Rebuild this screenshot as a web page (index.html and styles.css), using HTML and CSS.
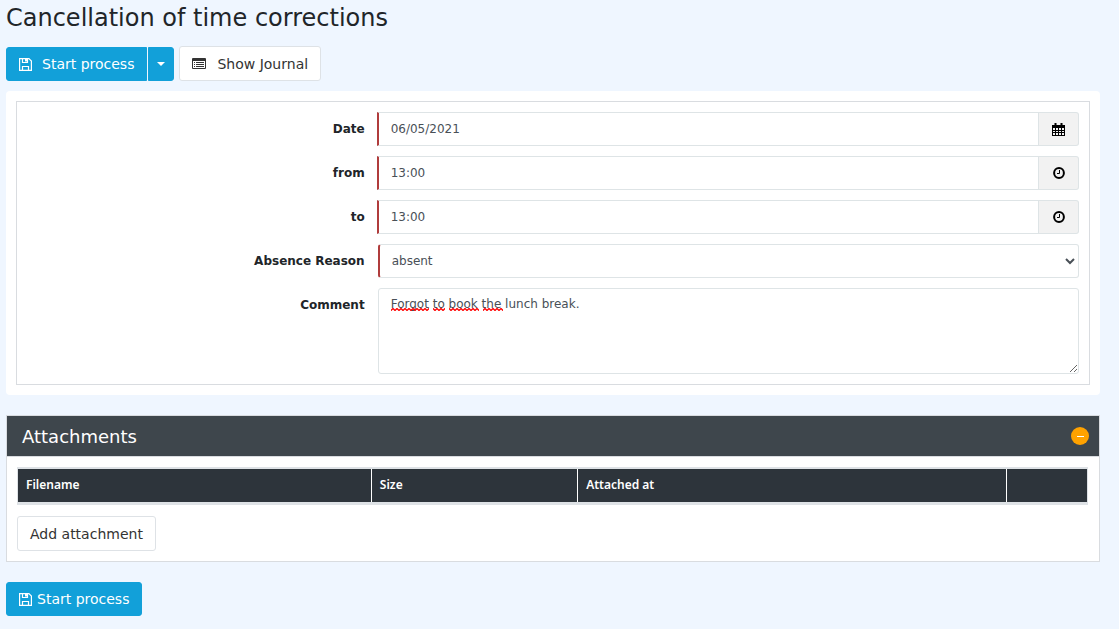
FILE: index.html
```html
<!doctype html>
<html lang="en">
  <head>
    <meta charset="UTF-8" />
    <meta name="viewport" content="width=device-width, initial-scale=1.0" />
    <title>Cancellation of time corrections</title>
    <link rel="stylesheet" href="styles.css">
  </head>
  <body>
    <svg class="sprite" aria-hidden="true">
      <symbol id="icon-save" viewBox="0 0 13 13">
        <path d="M.6.6h9.3l2.5 2.5v9.3H.6zM3.5.6v3.9h5V.6M3.5 12.4V8.5h6v3.9" fill="none" stroke="currentColor" stroke-width="1.2" />
        <path d="M6 1h2v2.5H6z" fill="currentColor" />
      </symbol>
      <symbol id="icon-clock" viewBox="0 0 12 12">
        <circle cx="6" cy="6" r="4.9" fill="none" stroke="currentColor" stroke-width="2" />
        <path d="M6.5 3v3.5H4" fill="none" stroke="currentColor" />
      </symbol>
    </svg>
    <main class="page">
      <h1>Cancellation of time corrections</h1>
      <div class="toolbar">
        <div class="btn-group">
          <button type="submit" form="correction" class="btn btn-primary">
            <svg class="icon-save icon-wide"><use href="#icon-save" /></svg>Start process
          </button>
          <button type="button" class="btn btn-primary btn-toggle" aria-label="More actions"><span class="caret"></span></button>
        </div>
        <button type="button" class="btn btn-default">
          <svg class="icon-list" viewBox="0 0 14 11">
            <path d="M1 0h12a1 1 0 0 1 1 1v9a1 1 0 0 1-1 1H1a1 1 0 0 1-1-1V1a1 1 0 0 1 1-1zM1 3v7h12V3z" fill="currentColor" fill-rule="evenodd" />
            <path d="M2 4.5h1M4 4.5h8M2 6.5h1M4 6.5h8M2 8.5h1M4 8.5h8" stroke="currentColor" />
          </svg>Show Journal
        </button>
      </div>

      <form class="panel" id="correction">
        <div class="fields">
          <div class="row">
            <label for="date">Date</label>
            <div class="input-group">
              <input type="text" id="date" class="control required" value="06/05/2021">
              <button type="button" class="addon" aria-label="Pick date">
                <svg class="icon-calendar" viewBox="0 0 13 13">
                  <path d="M0 2h13v11H0zM1 5v2h2V5zM4 5v2h2V5zM7 5v2h2V5zM10 5v2h2V5zM1 8v1h2V8zM4 8v1h2V8zM7 8v1h2V8zM10 8v1h2V8zM1 10v2h2v-2zM4 10v2h2v-2zM7 10v2h2v-2zM10 10v2h2v-2z" fill="currentColor" fill-rule="evenodd" />
                  <path d="M3.5 0v3M9.5 0v3" stroke="currentColor" stroke-width="2" />
                </svg>
              </button>
            </div>
          </div>
          <div class="row">
            <label for="from">from</label>
            <div class="input-group">
              <input type="text" id="from" class="control required" value="13:00">
              <button type="button" class="addon" aria-label="Pick start time"><svg class="icon-clock"><use href="#icon-clock" /></svg></button>
            </div>
          </div>
          <div class="row">
            <label for="to">to</label>
            <div class="input-group">
              <input type="text" id="to" class="control required" value="13:00">
              <button type="button" class="addon" aria-label="Pick end time"><svg class="icon-clock"><use href="#icon-clock" /></svg></button>
            </div>
          </div>
          <div class="row">
            <label for="reason">Absence Reason</label>
            <select id="reason" class="control required">
              <option>absent</option>
            </select>
          </div>
          <div class="row">
            <label for="comment">Comment</label>
            <div class="comment">
              <textarea id="comment" class="control" spellcheck="false">Forgot to book the lunch break.</textarea>
              <svg class="spelling" width="112" height="3" aria-hidden="true">
                <defs>
                  <pattern id="wave" width="4" height="3" patternUnits="userSpaceOnUse">
                    <path d="M-1 1.5l1 1 2-2 2 2 1-1" fill="none" stroke="#f00" stroke-width="1.3" />
                  </pattern>
                </defs>
                <path d="M0 0h38v3H0zM42 0h12v3H42zM58 0h30v3H58zM92 0h20v3H92z" fill="url(#wave)" />
              </svg>
            </div>
          </div>
        </div>
      </form>

      <section class="attachments">
        <header>
          <h2>Attachments</h2>
          <button type="button" class="collapse" aria-label="Collapse"></button>
        </header>
        <div class="attachments-body">
          <table>
            <thead>
              <tr>
                <th class="col-name">Filename</th>
                <th class="col-size">Size</th>
                <th class="col-date">Attached at</th>
                <th></th>
              </tr>
            </thead>
          </table>
          <button type="button" class="btn btn-default">Add attachment</button>
        </div>
      </section>

      <button type="submit" form="correction" class="btn btn-primary">
        <svg class="icon-save icon-tight"><use href="#icon-save" /></svg>Start process
      </button>
    </main>
  </body>
</html>
```

FILE: styles.css
```css
* {
  box-sizing: border-box;
}
body {
  margin: 0;
  background-color: #eff6ff;
  color: #212529;
  font-family: Verdana, "DejaVu Sans", sans-serif;
  font-size: 14px;
}
button,
input,
select,
textarea {
  font-family: inherit;
}
.sprite {
  display: none;
}
.page {
  padding: 3px 19px 12px 6px;
}
h1 {
  margin: 0 0 13px;
  font-size: 24px;
  line-height: 30px;
  font-weight: normal;
}

/* buttons */
.toolbar {
  display: flex;
  align-items: flex-end;
  gap: 5px;
  margin-bottom: 10px;
}
.btn-group {
  display: flex;
  gap: 1px;
}
.btn {
  display: inline-flex;
  align-items: center;
  height: 34px;
  padding: 0 12px;
  border: 1px solid #dee2e6;
  border-radius: 3px;
  font-size: 14px;
  white-space: nowrap;
}
.btn-primary {
  background-color: #12a0d9;
  border-color: #12a0d9;
  color: #fff;
}
.btn-default {
  height: 35px;
  background-color: #fff;
  color: #333;
}
.btn-group .btn:first-child {
  border-radius: 3px 0 0 3px;
}
.btn-group .btn-toggle {
  padding: 0 8px;
  border-radius: 0 3px 3px 0;
}
.caret {
  border: 4px solid transparent;
  border-top-color: #fff;
  border-bottom: 0;
}
.icon-save {
  width: 13px;
  height: 13px;
}
.icon-wide {
  margin-right: 10px;
}
.icon-tight {
  margin-right: 5px;
}
.icon-list {
  width: 14px;
  height: 11px;
  margin-right: 11px;
}
.icon-clock {
  width: 12px;
  height: 12px;
}
.icon-calendar {
  width: 13px;
  height: 13px;
}

/* form */
.panel {
  margin-bottom: 20px;
  padding: 10px;
  background-color: #fff;
  border-radius: 4px;
}
.fields {
  display: grid;
  gap: 10px;
  padding: 10px;
  border: 1px solid #d9dce0;
}
.row {
  display: grid;
  grid-template-columns: 1fr 2fr;
}
label {
  padding: 8px 13px 0 0;
  font-size: 12px;
  line-height: 18px;
  font-weight: bold;
  text-align: right;
}
.control {
  width: 100%;
  height: 34px;
  padding: 0 12px;
  background-color: #fff;
  border: 1px solid #dee4e6;
  border-radius: 3px;
  color: #495057;
  font-size: 12px;
}
.required {
  border-left: 2px solid #b03c3c;
}
.input-group {
  display: flex;
  margin-left: -1px;
}
.input-group .control {
  flex: 1;
  border-radius: 0;
}
select.control {
  padding: 0 8px;
}
.addon {
  display: flex;
  align-items: center;
  justify-content: center;
  width: 40px;
  padding: 0;
  background-color: #f2f2f2;
  border: 1px solid #dee4e6;
  border-left: 0;
  border-radius: 0 3px 3px 0;
  color: #000;
}
.comment {
  position: relative;
}
textarea.control {
  display: block;
  height: 86px;
  padding: 6px 12px;
  line-height: 18px;
}
.spelling {
  position: absolute;
  top: 20px;
  left: 13px;
  pointer-events: none;
}

/* attachments */
.attachments {
  margin-bottom: 20px;
  background-color: #fff;
  border: 1px solid #d9dce0;
}
.attachments header {
  display: flex;
  align-items: center;
  justify-content: space-between;
  height: 40px;
  padding: 0 10px 0 15px;
  background-color: #3e464c;
}
h2 {
  margin: 0;
  color: #fff;
  font-size: 18px;
  font-weight: normal;
}
.collapse {
  display: flex;
  align-items: center;
  justify-content: center;
  width: 18px;
  height: 18px;
  padding: 0;
  border: 0;
  border-radius: 50%;
  background-color: #ffa200;
}
.collapse::before {
  content: "";
  width: 7px;
  height: 1px;
  background-color: #fff;
}
.attachments-body {
  padding: 10px 11px 10px 10px;
  border-top: 1px solid #d9dce0;
}
table {
  width: 100%;
  margin-bottom: 11px;
  table-layout: fixed;
  border-spacing: 0;
  border: solid #dee2e6;
  border-width: 2px 1px 3px;
}
th {
  height: 33px;
  padding: 0 8px 2px;
  background-color: #2d343b;
  border-right: 1px solid #fff;
  color: #fff;
  font-family: "Noto Sans", sans-serif;
  font-size: 12px;
  font-weight: 600;
  text-align: left;
}
th:last-child {
  border-right: 0;
}
.col-name {
  width: 33.1%;
}
.col-size {
  width: 19.3%;
}
.col-date {
  width: 40.1%;
}
```
